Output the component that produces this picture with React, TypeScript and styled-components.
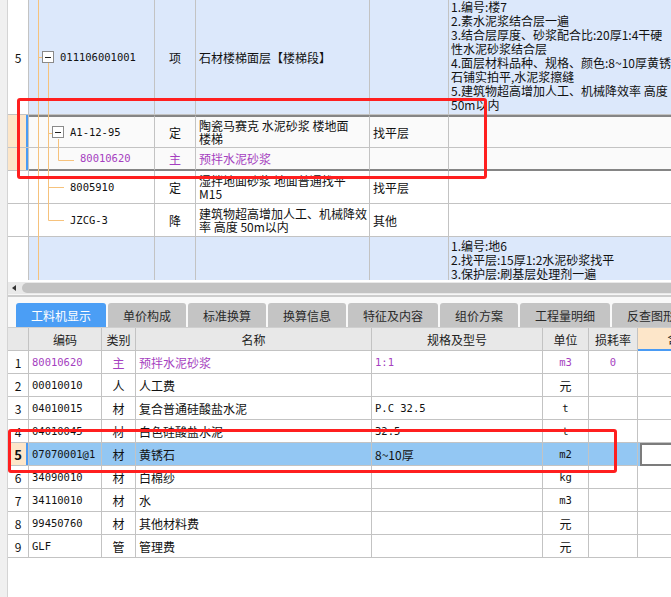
import React from "react";
import styled, { createGlobalStyle } from "styled-components";

const GlobalStyle = createGlobalStyle`
  html, body {
    margin: 0;
    padding: 0;
    background: #fff;
  }
  body {
    font-family: "Noto Sans CJK SC", "Liberation Sans", sans-serif;
    font-size: 12px;
    color: #111;
  }
  * {
    box-sizing: border-box;
  }
`;

const purple = "#a53fc0";
const gridLine = "#c3c3c3";
const selEdge = "#858585";
const monoStack = `"DejaVu Sans Mono", "Noto Sans CJK SC", monospace`;

const Page = styled.div`
  position: relative;
  display: flex;
  width: 671px;
  height: 597px;
  overflow: hidden;
  background: #fff;
`;

const SideStrip = styled.div`
  flex: none;
  width: 8px;
  background: #f0f0f0;
  border-right: 1px solid #d4d4d4;
`;

const Main = styled.div`
  flex: 1;
  min-width: 0;
  display: flex;
  flex-direction: column;
`;

const Code = styled.span<{ $color?: string }>`
  font-family: ${monoStack};
  font-size: 10.5px;
  color: ${(p) => p.$color || "inherit"};
`;

/* ---------- top tree grid ---------- */

const TopPane = styled.div`
  position: relative;
  height: 280px;
  overflow: hidden;
  flex: none;
`;

const topCols = "21px 126px 41px 174px 79px 260px";

const TopRow = styled.div<{ $h: number; $blue?: boolean; $edge?: "top" | "bottom" }>`
  display: grid;
  grid-template-columns: ${topCols};
  height: ${(p) => p.$h}px;
  background: ${(p) => (p.$blue ? "#dce8fb" : p.$edge ? "#fafafa" : "#fff")};

  & > *:not(:first-child) {
    ${(p) => (p.$edge === "top" ? `border-top: 2px solid ${selEdge};` : "")}
    ${(p) => (p.$edge === "bottom" ? `border-bottom: 2px solid ${selEdge};` : "")}
  }
`;

const Cell = styled.div<{ $center?: boolean; $color?: string }>`
  display: flex;
  align-items: center;
  justify-content: ${(p) => (p.$center ? "center" : "flex-start")};
  padding: 0 3px;
  border-right: 1px solid ${gridLine};
  border-bottom: 1px solid ${gridLine};
  color: ${(p) => p.$color || "#111"};
  white-space: nowrap;
  overflow: hidden;
  line-height: 13px;
`;

const NumCell = styled(Cell)<{ $picked?: boolean }>`
  justify-content: center;
  padding: 0;
  background: ${(p) => (p.$picked ? "#fde6c9" : "#fff")};
  box-shadow: ${(p) => (p.$picked ? "inset -2px 0 0 #4a9bf4" : "none")};
`;

const TreeCell = styled(Cell)<{ $indent: number }>`
  padding-left: ${(p) => p.$indent}px;
  gap: 6px;
`;

const Expander = styled.span`
  position: relative;
  z-index: 1;
  flex: none;
  width: 12px;
  height: 12px;
  border: 1px solid #8a8a8a;
  background: #fff;
  display: flex;
  align-items: center;
  justify-content: center;

  &::after {
    content: "";
    width: 6px;
    height: 1px;
    background: #222;
  }
`;

const Lines = styled.div`
  display: flex;
  flex-direction: column;
  align-items: flex-start;
  justify-content: center;
  line-height: 13px;
`;

const DescCell = styled(Cell)`
  flex-direction: column;
  align-items: flex-start;
  justify-content: flex-start;
  padding: 0 2px;
  line-height: 14px;
  border-right: none;
`;

const TreeLines = styled.svg`
  position: absolute;
  left: 21px;
  top: 0;
  pointer-events: none;
`;

/* ---------- splitter / scrollbar ---------- */

const Gap = styled.div`
  height: 2px;
  flex: none;
`;

const HScroll = styled.div`
  flex: none;
  height: 13px;
  background: #e9e9e9;
  display: flex;
  align-items: center;
  padding-left: 4px;
  gap: 6px;
  border-bottom: 1px solid #f6f6f6;
`;

const ScrollArrow = styled.span`
  width: 0;
  height: 0;
  border-top: 3px solid transparent;
  border-bottom: 3px solid transparent;
  border-right: 4px solid #333;
`;

const ScrollThumb = styled.span`
  flex: 1;
  height: 10px;
  border-radius: 5px 0 0 5px;
  background: #c3c3c3;
`;

const Splitter = styled.div`
  flex: none;
  height: 2px;
  background: #cdcdcd;
`;

/* ---------- tabs ---------- */

const TabBar = styled.div`
  flex: none;
  height: 30px;
  display: flex;
  align-items: flex-end;
  gap: 2px;
  padding-left: 8px;
  background: #f9f9f9;
  white-space: nowrap;
  overflow: hidden;
`;

const Tab = styled.div<{ $active?: boolean }>`
  flex: none;
  height: 24px;
  padding: 0 15px;
  display: flex;
  align-items: center;
  border-radius: 3px 3px 0 0;
  background: ${(p) => (p.$active ? "#4b9ef5" : "#c4c4c4")};
  color: ${(p) => (p.$active ? "#fff" : "#2a2a2a")};
  font-size: 12px;
`;

/* ---------- bottom material grid ---------- */

const botCols = "21px 73px 34px 236px 171px 46px 49px 84px";

const HeadRow = styled.div`
  display: grid;
  grid-template-columns: ${botCols};
  height: 24px;
  background: #e8e8e8;
  border-top: 1px solid #cfcfcf;
`;

const HeadCell = styled.div<{ $accent?: boolean }>`
  display: flex;
  align-items: center;
  justify-content: center;
  border-right: 1px solid ${gridLine};
  border-bottom: ${(p) => (p.$accent ? "2px solid #4a9bf4" : `1px solid ${gridLine}`)};
  background: ${(p) => (p.$accent ? "#fde6c9" : "transparent")};
  color: #222;
  white-space: nowrap;
  overflow: hidden;
`;

const BodyRow = styled.div<{ $selected?: boolean }>`
  display: grid;
  grid-template-columns: ${botCols};
  height: 23px;
  background: ${(p) => (p.$selected ? "#93c7f3" : "#fff")};
`;

const BodyCell = styled.div<{ $center?: boolean; $purple?: boolean }>`
  display: flex;
  align-items: center;
  justify-content: ${(p) => (p.$center ? "center" : "flex-start")};
  padding: 0 3px;
  border-right: 1px solid ${gridLine};
  border-bottom: 1px solid ${gridLine};
  color: ${(p) => (p.$purple ? purple : "#111")};
  white-space: nowrap;
  overflow: hidden;
`;

const BodyNum = styled(BodyCell)<{ $picked?: boolean }>`
  justify-content: center;
  padding: 0;
  background: ${(p) => (p.$picked ? "#fde6c9" : "#fff")};
  font-weight: ${(p) => (p.$picked ? 700 : 400)};
  font-size: ${(p) => (p.$picked ? "13px" : "12px")};
  box-shadow: ${(p) => (p.$picked ? "inset -2px 0 0 #4a9bf4" : "none")};
`;

const EditCell = styled.div<{ $editing?: boolean }>`
  border-bottom: 1px solid ${gridLine};
  background: #fff;
  ${(p) => (p.$editing ? "border: 2px solid #7c7c7c; margin-left: 2px;" : "")}
`;

/* ---------- annotation ---------- */

const Mark = styled.div<{ $x: number; $y: number; $w: number; $h: number }>`
  position: absolute;
  left: ${(p) => p.$x}px;
  top: ${(p) => p.$y}px;
  width: ${(p) => p.$w}px;
  height: ${(p) => p.$h}px;
  border: 3px solid #ff1f1f;
  border-radius: 3px;
  pointer-events: none;
`;

const row5Desc = [
  "1.编号:楼7",
  "2.素水泥浆结合层一遍",
  "3.结合层厚度、砂浆配合比:20厚1:4干硬",
  "性水泥砂浆结合层",
  "4.面层材料品种、规格、颜色:8~10厚黄锈",
  "石铺实拍平,水泥浆擦缝",
  "5.建筑物超高增加人工、机械降效率 高度",
  "50m以内",
];

const nextDesc = ["1.编号:地6", "2.找平层:15厚1:2水泥砂浆找平", "3.保护层:刷基层处理剂一遍"];

const tabs = ["工料机显示", "单价构成", "标准换算", "换算信息", "特征及内容", "组价方案", "工程量明细", "反查图形工程量"];

type Material = { code: string; kind: string; name: string; spec: string; unit: string; loss: string };

const materials: Material[] = [
  { code: "80010620", kind: "主", name: "预拌水泥砂浆", spec: "1:1", unit: "m3", loss: "0" },
  { code: "00010010", kind: "人", name: "人工费", spec: "", unit: "元", loss: "" },
  { code: "04010015", kind: "材", name: "复合普通硅酸盐水泥", spec: "P.C 32.5", unit: "t", loss: "" },
  { code: "04010045", kind: "材", name: "白色硅酸盐水泥", spec: "32.5", unit: "t", loss: "" },
  { code: "07070001@1", kind: "材", name: "黄锈石", spec: "8~10厚", unit: "m2", loss: "" },
  { code: "34090010", kind: "材", name: "白棉纱", spec: "", unit: "kg", loss: "" },
  { code: "34110010", kind: "材", name: "水", spec: "", unit: "m3", loss: "" },
  { code: "99450760", kind: "材", name: "其他材料费", spec: "", unit: "元", loss: "" },
  { code: "GLF", kind: "管", name: "管理费", spec: "", unit: "元", loss: "" },
];

const isAscii = (s: string) => /^[\x20-\x7e]*$/.test(s);

const TopGrid = () => (
  <TopPane>
    <TopRow $h={115} $blue>
      <NumCell>5</NumCell>
      <TreeCell $indent={13}>
        <Expander />
        <Code>011106001001</Code>
      </TreeCell>
      <Cell $center>项</Cell>
      <Cell>石材楼梯面层【楼梯段】</Cell>
      <Cell />
      <DescCell>
        {row5Desc.map((l) => (
          <div key={l}>{l}</div>
        ))}
      </DescCell>
    </TopRow>

    <TopRow $h={33} $edge="top">
      <NumCell $picked />
      <TreeCell $indent={23}>
        <Expander />
        <Code>A1-12-95</Code>
      </TreeCell>
      <Cell $center>定</Cell>
      <Cell>
        <Lines>
          <div>陶瓷马赛克 水泥砂浆 楼地面</div>
          <div>楼梯</div>
        </Lines>
      </Cell>
      <Cell>找平层</Cell>
      <DescCell />
    </TopRow>

    <TopRow $h={23} $edge="bottom">
      <NumCell $picked />
      <TreeCell $indent={51}>
        <Code $color={purple}>80010620</Code>
      </TreeCell>
      <Cell $center $color={purple}>
        主
      </Cell>
      <Cell $color={purple}>预拌水泥砂浆</Cell>
      <Cell />
      <DescCell />
    </TopRow>

    <TopRow $h={33}>
      <NumCell />
      <TreeCell $indent={41}>
        <Code>8005910</Code>
      </TreeCell>
      <Cell $center>定</Cell>
      <Cell>
        <Lines>
          <div>湿拌地面砂浆 地面普通找平</div>
          <div>M15</div>
        </Lines>
      </Cell>
      <Cell>找平层</Cell>
      <DescCell />
    </TopRow>

    <TopRow $h={33}>
      <NumCell />
      <TreeCell $indent={41}>
        <Code>JZCG-3</Code>
      </TreeCell>
      <Cell $center>降</Cell>
      <Cell>
        <Lines>
          <div>建筑物超高增加人工、机械降效</div>
          <div>率 高度 50m以内</div>
        </Lines>
      </Cell>
      <Cell>其他</Cell>
      <DescCell />
    </TopRow>

    <TopRow $h={50} $blue>
      <NumCell />
      <TreeCell $indent={0} />
      <Cell />
      <Cell />
      <Cell />
      <DescCell style={{ paddingTop: 2 }}>
        {nextDesc.map((l) => (
          <div key={l}>{l}</div>
        ))}
      </DescCell>
    </TopRow>

    <TreeLines width="126" height="280" viewBox="0 0 126 280">
      <g stroke="#f6c27c" strokeWidth="1" fill="none">
        <path d="M9.5 0V280" />
        <path d="M9.5 57.5H13" />
        <path d="M19.5 63V220.5" />
        <path d="M19.5 133.5H23" />
        <path d="M29.5 139V160.5H45" />
        <path d="M19.5 187.5H35" />
        <path d="M19.5 220.5H35" />
      </g>
    </TreeLines>
  </TopPane>
);

const cellText = (s: string) => (s && isAscii(s) ? <Code>{s}</Code> : s);

const MaterialGrid = () => (
  <div>
    <HeadRow>
      <HeadCell />
      <HeadCell>编码</HeadCell>
      <HeadCell>类别</HeadCell>
      <HeadCell>名称</HeadCell>
      <HeadCell>规格及型号</HeadCell>
      <HeadCell>单位</HeadCell>
      <HeadCell>损耗率</HeadCell>
      <HeadCell $accent>含量</HeadCell>
    </HeadRow>
    {materials.map((m, i) => {
      const sel = i === 4;
      const main = i === 0;
      return (
        <BodyRow key={m.code} $selected={sel}>
          <BodyNum $picked={sel}>{i + 1}</BodyNum>
          <BodyCell $purple={main}>{cellText(m.code)}</BodyCell>
          <BodyCell $center $purple={main}>
            {m.kind}
          </BodyCell>
          <BodyCell $purple={main}>{m.name}</BodyCell>
          <BodyCell $purple={main}>{cellText(m.spec)}</BodyCell>
          <BodyCell $center $purple={main}>
            {cellText(m.unit)}
          </BodyCell>
          <BodyCell $center $purple={main}>
            {cellText(m.loss)}
          </BodyCell>
          <EditCell $editing={sel} />
        </BodyRow>
      );
    })}
  </div>
);

export default function App() {
  return (
    <>
      <GlobalStyle />
      <Page>
        <SideStrip />
        <Main>
          <TopGrid />
          <Gap />
          <HScroll>
            <ScrollArrow />
            <ScrollThumb />
          </HScroll>
          <Splitter />
          <TabBar>
            {tabs.map((t, i) => (
              <Tab key={t} $active={i === 0}>
                {t}
              </Tab>
            ))}
          </TabBar>
          <MaterialGrid />
        </Main>
        <Mark $x={17} $y={98} $w={470} $h={81} />
        <Mark $x={8} $y={429} $w={609} $h={44} />
      </Page>
    </>
  );
}
